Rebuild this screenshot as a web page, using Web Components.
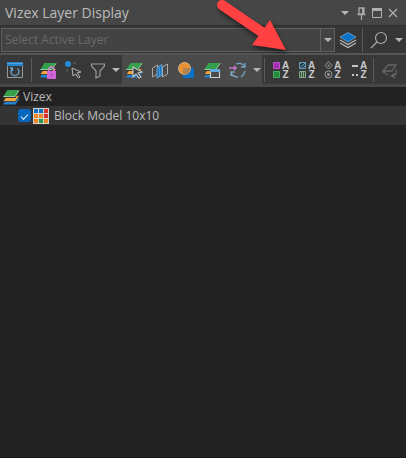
<!DOCTYPE html>
<html lang="en">
<head>
<meta charset="utf-8">
<title>Vizex Layer Display</title>
<style>
html,body{margin:0;min-height:100vh;background:#222;color:#bcbcbc;font-family:"Open Sans","Noto Sans",sans-serif;font-size:12px}
</style>
</head>
<body>
<layer-panel></layer-panel>
<script>
const layers = `<path d="M2 17.500l4-6h12.500l-4 6z" fill="#2383cf"/><path d="M2 14.500l4-6h12.500l-4 6z" fill="#f2a53c" stroke="#333" stroke-width=".8"/><path d="M2 11l4-7h12.500l-4 7z" fill="#333"/><path d="M2 10l4.500-7h12l-4.500 7z" fill="#35a04b"/><path d="M2.500 9.500h11.500l4-6" fill="none" stroke="#b9d0b4" stroke-width=".8"/>`;
const cursor = `<path d="M9 7l9 5-4 1 3 4-2 1-3-4-3 3z" fill="#414141" stroke="#c4c4c4" stroke-width="1.1"/>`;
const gridCells = [['#0871c5','#0871c5','#d92f2c'],['#ee872a','#ee872a','#d92f2c'],['#ee872a','#2a9848','#ee872a']];
const icons = {
  caret: `<path d="M6 8h8l-4 4z" fill="#b8b8b8"/>`,
  pin: `<path d="M8 5h5v6H8zM6.500 11.500h8M10.500 12v5" fill="none" stroke="#a8a8a8" stroke-width="1.300"/><path d="M11 5h2v6h-2z" fill="#a8a8a8"/>`,
  maximize: `<path d="M5.500 6.500h9v8h-9z" fill="none" stroke="#b0b0b0"/><path d="M5 5h10v3H5z" fill="#b0b0b0"/>`,
  close: `<path d="M6 6l8 8M14 6l-8 8" stroke="#b0b0b0" stroke-width="1.200"/>`,
  stack: `<path d="M2 13l8 4.500 8-4.500M2 10l8 4.500 8-4.500" fill="none" stroke="#b8b8b8" stroke-width="1.300"/><path d="M2 7l8-4.500L18 7l-8 5z" fill="#0873c8" stroke="#9fc1df" stroke-width=".6"/>`,
  search: `<circle cx="12" cy="8" r="5.500" fill="none" stroke="#a8a8a8" stroke-width="1.200"/><path d="M8 12l-6 6" stroke="#a8a8a8" stroke-width="1.300"/>`,
  refresh: `<path d="M2.500 3v14.500h15V3" fill="#383838" stroke="#999"/><path d="M2 2h16v4H2z" fill="#2585cf"/><path d="M2 3.500h16" stroke="#77abd2" stroke-width=".7"/><path d="M12.500 8.500a4 4 0 1 1-5 0M7.500 11V8H5" fill="none" stroke="#69a4cf" stroke-width="1.300"/>`,
  lock: `${layers}<path d="M9 11h9v8H9z" fill="#ce65d6"/><path d="M11 11V9q0-2 2.500-2T16 9v2" fill="none" stroke="#d684db" stroke-width="1.500"/><path d="M13 14h1v2h-1z" fill="#8e3598"/>`,
  pick: `<circle cx="5" cy="4" r="3" fill="#218bd9"/><path d="M9 8l9 4-4 1 3 4-1.500 1-3-4-2.500 2z" fill="none" stroke="#b4b4b4"/><path d="M10 3h3M4 9v3" stroke="#666"/>`,
  filter: `<path d="M3.500 4h13v2L12 11v5l-4 2v-7L3.500 6z" fill="none" stroke="#9c9c9c" stroke-width="1.200"/>`,
  layersPick: `${layers}${cursor}`,
  panels: `<path d="M2.500 8l5-3v9l-5 3z" fill="none" stroke="#aaa"/><path d="M12.500 7l5-3v10l-5 3z" fill="none" stroke="#aaa"/><path d="M7 7.500l5-3v10.500l-5 3z" fill="#1979c5" stroke="#7eafd5" stroke-width=".8"/><path d="M9.500 7v9" stroke="#4b98d6"/>`,
  overlap: `<path d="M7 8h11v10H7z" fill="#0871c5"/><circle cx="8.500" cy="8.500" r="6" fill="#e99231" stroke="#d9b58a"/><path d="M7 8h7.500a6 6 0 0 1-6 6.500H7z" fill="#ad844f"/>`,
  layersWindow: `${layers}<path d="M8.500 9.500h9v8h-9z" fill="#4b4b4b" stroke="#ccc" stroke-width="1.200"/><path d="M8 9h10v3H8z" fill="#64a8dc"/>`,
  sync: `<path d="M8 4q6-2 9 3M17 3v4h-4M3 12q1 5 7 5M3 16v-4h4M17 11q-1 4-4 6" fill="none" stroke="#78a3c1" stroke-width="1.300"/><path d="M1 8h7M6 6l2 2-2 2" fill="none" stroke="#c376cd" stroke-width="1.500"/>`,
  colors: `<path d="M2.500 2.500h6v6h-6z" fill="#a12eaf" stroke="#c44dce"/><path d="M2.500 11.500h6v6h-6z" fill="#208d3d" stroke="#45ae5a"/>`,
  hatch: `<path d="M2.500 2.500h6v6h-6zM2 9l7-7M2 5l3-3M5 9l4-4" fill="#263c4a" stroke="#6796b4"/><path d="M2.500 11.500h6v6h-6zM4.500 11v7M6.500 11v7" fill="#384b3c" stroke="#82aa85"/>`,
  symbols: `<path d="M5.500 1.500L9 5.500l-3.500 3.500L2 5.500z" fill="none" stroke="#999"/><circle cx="5.500" cy="5.500" r="1" fill="#999"/><circle cx="5.500" cy="14.500" r="3.500" fill="none" stroke="#999"/><circle cx="5.500" cy="14.500" r="1.500" fill="#999"/>`,
  lines: `<path d="M3 5h6v2H3zM3 14h2v2H3zM7 14h2v2H7z" fill="#c4c4c4"/>`,
  undo: `<path d="M3 11l5-6h8l-4 6zM3 12l5 3M16 10q2 5-4 6M14.500 13.500l-3 2.500 3.500 2" fill="none" stroke="#666" stroke-width="1.300"/>`,
  layers,
  grid: `<path d="M2 2h16v16H2z" fill="#d4d4cc"/>` + gridCells.map((r,j)=>r.map((c,i)=>`<path d="M${3+i*5} ${3+j*5}h4v4h-4z" fill="${c}"/>`).join('')).join('')
};

class VizIcon extends HTMLElement {
  connectedCallback() {
    this.attachShadow({mode:'open'}).innerHTML = `<style>:host{display:block;width:20px;height:20px;flex:none}svg{display:block}</style><svg width="20" height="20" viewBox="0 0 20 20" aria-hidden="true">${icons[this.getAttribute('name')]}</svg>`;
  }
}
customElements.define('viz-icon', VizIcon);

class ToolButton extends HTMLElement {
  connectedCallback() {
    const text = this.getAttribute('text');
    this.attachShadow({mode:'open'}).innerHTML = `<style>:host{display:block;flex:none;width:24px}:host([narrow]){width:10px}:host([slim]){width:16px}button{display:flex;align-items:center;justify-content:center;width:100%;height:24px;padding:0;border:0;background:none;overflow:visible}button:hover{background:#5a5a5a}:host([narrow]) viz-icon,:host([slim]) viz-icon{margin:0 -5px}:host([text]) viz-icon{margin-right:-9px}span{width:8px;color:#c8c8c8;font:bold 10px/9px "Liberation Sans",sans-serif;word-break:break-all;text-align:center}</style><button type="button" aria-label="${this.getAttribute('label')}"><viz-icon name="${this.getAttribute('icon')}"></viz-icon>${text ? `<span>${text}</span>` : ''}</button>`;
  }
}
customElements.define('tool-button', ToolButton);

class ToolSeparator extends HTMLElement {
  connectedCallback() {
    this.attachShadow({mode:'open'}).innerHTML = `<style>:host{display:block;flex:none;width:1px;height:24px;background:#5a5a5a}</style>`;
  }
}
customElements.define('tool-separator', ToolSeparator);

class PanelTitle extends HTMLElement {
  connectedCallback() {
    this.attachShadow({mode:'open'}).innerHTML = `<style>:host{display:flex;align-items:center;height:25px;padding:0 5px;background:#464646;box-sizing:border-box}h1{flex:1;margin:0;font-size:14px;line-height:25px;font-weight:400;white-space:nowrap}div{display:flex}</style>
    <h1><slot></slot></h1><div><tool-button slim icon="caret" label="Window options"></tool-button><tool-button slim icon="pin" label="Pin"></tool-button><tool-button slim icon="maximize" label="Maximize"></tool-button><tool-button slim icon="close" label="Close"></tool-button></div>`;
  }
}
customElements.define('panel-title', PanelTitle);

class LayerPicker extends HTMLElement {
  connectedCallback() {
    this.attachShadow({mode:'open'}).innerHTML = `<style>:host{display:flex;align-items:center;height:28px;padding:0 2px 0 1px;background:#363636;border-top:1px solid #303030;box-sizing:border-box}label{display:grid;grid-template-columns:1fr 14px;flex:1;height:24px;box-sizing:border-box;border:1px solid #606060;background:#434343;align-items:center}select{grid-area:1/1/2/3;width:100%;height:22px;appearance:none;border:0;padding:0 20px 0 3px;background:none;color:#696969;font-family:inherit;font-size:12px}i{grid-area:1/2;display:flex;justify-content:center;align-items:center;height:22px;border-left:1px solid #606060;pointer-events:none;overflow:hidden}.actions{display:flex;align-items:center;padding-left:1px}tool-separator{margin:0 4px 0 2px}.actions tool-button:last-child{margin-left:3px}</style>
    <label><select aria-label="Active layer"><option>Select Active Layer</option></select><i><viz-icon name="caret"></viz-icon></i></label><div class="actions"><tool-button icon="stack" label="Layers"></tool-button><tool-separator></tool-separator><tool-button icon="search" label="Search"></tool-button><tool-button narrow icon="caret" label="Search options"></tool-button></div>`;
  }
}
customElements.define('layer-picker', LayerPicker);

class LayerToolbar extends HTMLElement {
  connectedCallback() {
    const b=(icon,label,text)=>`<tool-button icon="${icon}" label="${label}"${text ? ` text="${text}"` : ''}></tool-button>`;
    const d='<tool-button narrow icon="caret" label="More options"></tool-button>';
    this.attachShadow({mode:'open'}).innerHTML = `<style>:host{display:flex;align-items:center;height:34px;box-sizing:border-box;border-top:2px solid #555;border-bottom:3px solid #484848;background:#383838;padding-left:3px;overflow:hidden}div{display:flex;gap:1px;align-items:center;height:100%}.filters{padding:0 1px 0 4px}.display{gap:2px;background:#4a4a4a}.display+tool-separator{margin-left:2px}.sort{gap:2px;padding:0 3px}.tail{padding-left:4px}.start{padding-right:4px}</style>
    <div class="start">${b('refresh','Refresh window')}</div><tool-separator></tool-separator><div class="filters">${b('lock','Lock layers')}${b('pick','Pick point')}${b('filter','Filter')}${d}</div><div class="display">${b('layersPick','Select layer')}${b('panels','Sections')}${b('overlap','Overlap')}${b('layersWindow','Layer window')}${b('sync','Synchronize')}${d}</div><tool-separator></tool-separator><div class="sort">${b('colors','Sort colours','AZ')}${b('hatch','Sort hatches','AZ')}${b('symbols','Sort symbols','AZ')}${b('lines','Sort lines','AZ')}</div><tool-separator></tool-separator><div class="tail">${b('undo','Reset')}</div>`;
  }
}
customElements.define('layer-toolbar', LayerToolbar);

class LayerRow extends HTMLElement {
  connectedCallback() {
    const child=this.hasAttribute('child');
    this.attachShadow({mode:'open'}).innerHTML = `<style>:host{display:block;height:19px;padding-left:1px;line-height:19px;font-size:12px}:host([child]){padding-left:18px;background:#343434}label{display:flex;align-items:center;height:19px}viz-icon{margin-right:2px}input{appearance:none;flex:none;width:13px;height:13px;margin:0;border-radius:3px;background:#0767bd;display:grid;place-content:center}input:checked:before{content:"";width:6px;height:3px;border:solid #e5edf5;border-width:0 0 1px 1px;transform:rotate(-45deg)}:host([child]) viz-icon{margin-right:3px}</style><label>${child?'<input type="checkbox" checked>':''}<viz-icon name="${child?'grid':'layers'}"></viz-icon><slot></slot></label>`;
  }
}
customElements.define('layer-row', LayerRow);

class CalloutArrow extends HTMLElement {
  connectedCallback() {
    this.attachShadow({mode:'open'}).innerHTML = `<style>:host{display:block;position:absolute;left:212px;top:0;pointer-events:none;filter:drop-shadow(1px 3px 2px #0008)}svg{display:block}</style><svg width="82" height="56" viewBox="0 0 82 56" aria-hidden="true"><path d="M10 5L54 35" stroke="#ff4141" stroke-width="10" stroke-linecap="round"/><path d="M58 20L74 50 40 45z" fill="#ff4141"/></svg>`;
  }
}
customElements.define('callout-arrow', CalloutArrow);

class LayerPanel extends HTMLElement {
  connectedCallback() {
    this.attachShadow({mode:'open'}).innerHTML = `<style>:host{display:block;position:relative;min-height:100vh;background:#222;box-sizing:border-box;border-bottom:1px solid #171717}</style><panel-title>Vizex Layer Display</panel-title><layer-picker></layer-picker><layer-toolbar></layer-toolbar><main><layer-row>Vizex</layer-row><layer-row child>Block Model 10x10</layer-row></main><callout-arrow></callout-arrow>`;
  }
}
customElements.define('layer-panel', LayerPanel);
</script>
</body>
</html>
